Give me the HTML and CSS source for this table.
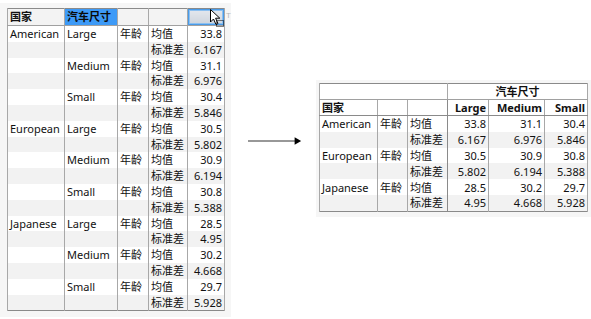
FILE: index.html
```html
<!DOCTYPE html>
<html lang="zh">
<head>
<meta charset="utf-8">
<title>汽车尺寸</title>
<link rel="stylesheet" href="styles.css">
</head>
<body>
<div class="canvas">
  <div class="panel panel-src">
    <table class="grid src">
      <colgroup>
        <col class="s1"><col class="s2"><col class="s3"><col class="s4"><col class="s5">
      </colgroup>
      <thead>
        <tr>
          <th class="hl">国家</th>
          <th class="hl sel-blue">汽车尺寸</th>
          <th></th>
          <th></th>
          <th class="sel-box"></th>
        </tr>
      </thead>
      <tbody>
        <tr><td>American</td><td>Large</td><td>年龄</td><td>均值</td><td class="num">33.8</td></tr>
        <tr class="alt"><td></td><td></td><td></td><td>标准差</td><td class="num">6.167</td></tr>
        <tr><td></td><td>Medium</td><td>年龄</td><td>均值</td><td class="num">31.1</td></tr>
        <tr class="alt"><td></td><td></td><td></td><td>标准差</td><td class="num">6.976</td></tr>
        <tr><td></td><td>Small</td><td>年龄</td><td>均值</td><td class="num">30.4</td></tr>
        <tr class="alt"><td></td><td></td><td></td><td>标准差</td><td class="num">5.846</td></tr>
        <tr><td>European</td><td>Large</td><td>年龄</td><td>均值</td><td class="num">30.5</td></tr>
        <tr class="alt"><td></td><td></td><td></td><td>标准差</td><td class="num">5.802</td></tr>
        <tr><td></td><td>Medium</td><td>年龄</td><td>均值</td><td class="num">30.9</td></tr>
        <tr class="alt"><td></td><td></td><td></td><td>标准差</td><td class="num">6.194</td></tr>
        <tr><td></td><td>Small</td><td>年龄</td><td>均值</td><td class="num">30.8</td></tr>
        <tr class="alt"><td></td><td></td><td></td><td>标准差</td><td class="num">5.388</td></tr>
        <tr><td>Japanese</td><td>Large</td><td>年龄</td><td>均值</td><td class="num">28.5</td></tr>
        <tr class="alt"><td></td><td></td><td></td><td>标准差</td><td class="num">4.95</td></tr>
        <tr><td></td><td>Medium</td><td>年龄</td><td>均值</td><td class="num">30.2</td></tr>
        <tr class="alt"><td></td><td></td><td></td><td>标准差</td><td class="num">4.668</td></tr>
        <tr><td></td><td>Small</td><td>年龄</td><td>均值</td><td class="num">29.7</td></tr>
        <tr class="alt"><td></td><td></td><td></td><td>标准差</td><td class="num">5.928</td></tr>
      </tbody>
    </table>
    <span class="tmark">T</span>
    <svg class="cursor" width="16" height="20" viewBox="0 0 16 20" aria-hidden="true">
      <path d="M1.5 1.5 L1.5 14 L4.5 11 L7 16.5 L9 15.5 L6.6 10.2 L10.8 10.2 Z" fill="#fff" stroke="#000" stroke-width="1" stroke-linejoin="round"/>
      <rect x="7.5" y="12.5" width="7" height="6" fill="none" stroke="#000" stroke-width="1" stroke-dasharray="1 1"/>
    </svg>
  </div>

  <svg class="arrow" width="60" height="10" viewBox="0 0 60 10" aria-hidden="true">
    <line x1="0" y1="5" x2="51" y2="5" stroke="#333" stroke-width="1.3"/>
    <path d="M50 1 L57 5 L50 9 Z" fill="#000"/>
  </svg>

  <div class="panel panel-out">
    <table class="grid out">
      <colgroup>
        <col class="o1"><col class="o2"><col class="o3"><col class="o4"><col class="o5"><col class="o6">
      </colgroup>
      <thead>
        <tr class="h1">
          <th colspan="3"></th>
          <th colspan="3" class="center">汽车尺寸</th>
        </tr>
        <tr class="h2">
          <th>国家</th>
          <th></th>
          <th class="rh-end"></th>
          <th class="num">Large</th>
          <th class="num">Medium</th>
          <th class="num">Small</th>
        </tr>
      </thead>
      <tbody>
        <tr><td>American</td><td>年龄</td><td class="rh-end">均值</td><td class="num">33.8</td><td class="num">31.1</td><td class="num">30.4</td></tr>
        <tr class="alt"><td></td><td></td><td class="rh-end">标准差</td><td class="num">6.167</td><td class="num">6.976</td><td class="num">5.846</td></tr>
        <tr><td>European</td><td>年龄</td><td class="rh-end">均值</td><td class="num">30.5</td><td class="num">30.9</td><td class="num">30.8</td></tr>
        <tr class="alt"><td></td><td></td><td class="rh-end">标准差</td><td class="num">5.802</td><td class="num">6.194</td><td class="num">5.388</td></tr>
        <tr><td>Japanese</td><td>年龄</td><td class="rh-end">均值</td><td class="num">28.5</td><td class="num">30.2</td><td class="num">29.7</td></tr>
        <tr class="alt"><td></td><td></td><td class="rh-end">标准差</td><td class="num">4.95</td><td class="num">4.668</td><td class="num">5.928</td></tr>
      </tbody>
    </table>
  </div>
</div>
</body>
</html>
```

FILE: styles.css
```css
html, body {
  margin: 0;
  padding: 0;
  background: #ffffff;
}

.canvas {
  display: flex;
  align-items: flex-start;
  width: 591px;
  height: 319px;
  font-family: "Noto Sans", "Noto Sans CJK SC", sans-serif;
  font-size: 11px;
  color: #111;
}

.panel {
  background: #f6f6f6;
  position: relative;
}

.panel-src {
  margin-top: 3px;
  padding: 5px 6px 6px 7px;
}

.panel-out {
  margin-top: 80px;
  margin-left: 12px;
  padding: 3px 3px 5px 3px;
}

.arrow {
  margin-top: 136px;
  margin-left: 17px;
}

.grid {
  border-collapse: collapse;
  table-layout: fixed;
  background: #ffffff;
  border: 1px solid #8a8a8a;
}

.grid th,
.grid td {
  padding: 0 2px;
  height: 15px;
  line-height: 15px;
  white-space: nowrap;
  overflow: hidden;
  text-align: left;
  font-weight: normal;
  border-left: 1px solid #a8a8a8;
  border-right: 1px solid #a8a8a8;
}

.grid th {
  font-weight: bold;
  border-bottom: 1px solid #a0a0a0;
}

.grid .num {
  text-align: right;
}

.grid .center {
  text-align: center;
}

.grid tr.alt td {
  background: #f2f2f2;
}

/* source table */
.src { width: 217px; }
.s1 { width: 57px; }
.s2 { width: 53px; }
.s3 { width: 31px; }
.s4 { width: 39px; }
.s5 { width: 37px; }

.src thead th {
  background: #f3f3f3;
  height: 16px;
  line-height: 16px;
}

.src thead th.sel-blue {
  background: #3d9af7;
  color: #0a0a0a;
}

.src thead th.sel-box {
  background: linear-gradient(#e4e8ee, #ccd3dc);
  box-shadow: inset 0 0 0 1px #4a9be8, inset 0 0 0 2px #8cc0f0;
}

.src tbody td {
  height: 14.8px;
  line-height: 14.8px;
  padding-top: 1px;
}

.tmark {
  position: absolute;
  left: 226px;
  top: 9px;
  font-size: 8px;
  line-height: 8px;
  color: #b8b8b8;
  font-family: "Liberation Sans", sans-serif;
}

.cursor {
  position: absolute;
  left: 209px;
  top: 5px;
}

/* output table */
.out { width: 268px; }
.o1 { width: 58px; }
.o2 { width: 30px; }
.o3 { width: 40px; }
.o4 { width: 41px; }
.o5 { width: 56px; }
.o6 { width: 43px; }

.out thead tr.h1 th {
  height: 15px;
}

.out thead tr.h2 th {
  height: 15px;
  border-bottom: 1px solid #8a8a8a;
}

.out tbody td {
  height: 15.8px;
  line-height: 15px;
}

.out .rh-end {
  border-right: 1px solid #8a8a8a;
}
```
